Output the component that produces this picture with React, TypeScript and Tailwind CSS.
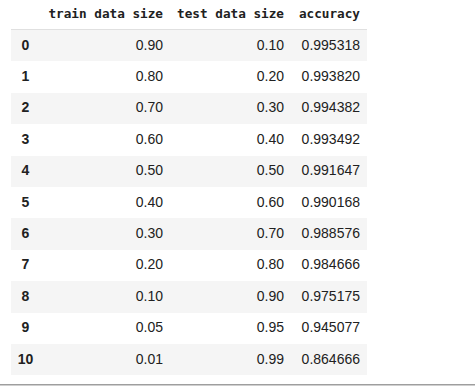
import React from "react";

const rows: [number, string, string, string][] = [
  [0, "0.90", "0.10", "0.995318"],
  [1, "0.80", "0.20", "0.993820"],
  [2, "0.70", "0.30", "0.994382"],
  [3, "0.60", "0.40", "0.993492"],
  [4, "0.50", "0.50", "0.991647"],
  [5, "0.40", "0.60", "0.990168"],
  [6, "0.30", "0.70", "0.988576"],
  [7, "0.20", "0.80", "0.984666"],
  [8, "0.10", "0.90", "0.975175"],
  [9, "0.05", "0.95", "0.945077"],
  [10, "0.01", "0.99", "0.864666"],
];

const cols = "grid grid-cols-[29px_130px_121px_76px]";

export default function App() {
  return (
    <div className="flex h-[387px] w-[475px] flex-col justify-between bg-white text-[#212121]">
      <div className="pl-[11px]">
        <div className="w-[356px]">
          {/* header */}
          <div
            className={`${cols} h-[30px] border-b border-[#e0e0e0] font-['DejaVu_Sans_Mono',monospace] text-[12.7px] font-bold`}
          >
            <div />
            <div className="flex items-center justify-end pr-[7px] pb-[2px]">train data size</div>
            <div className="flex items-center justify-end pr-[7px] pb-[2px]">test data size</div>
            <div className="flex items-center justify-end pr-[7px] pb-[2px]">accuracy</div>
          </div>
          {/* body */}
          {rows.map(([idx, train, test, acc]) => (
            <div
              key={idx}
              className={`${cols} h-[31.4px] font-['Liberation_Sans',Arial,sans-serif] text-[14px] ${
                idx % 2 === 0 ? "bg-[#f5f5f5]" : "bg-white"
              }`}
            >
              <div className="flex items-center justify-center pb-[1px] font-bold">{idx}</div>
              <div className="flex items-center justify-end pr-[7px] pb-[1px]">{train}</div>
              <div className="flex items-center justify-end pr-[7px] pb-[1px]">{test}</div>
              <div className="flex items-center justify-end pr-[7px] pb-[1px]">{acc}</div>
            </div>
          ))}
        </div>
      </div>
      <div>
        <div className="h-[1px] bg-[#9e9e9e]" />
        <div className="h-[1px] bg-[#cfcfcf]" />
        <div className="h-[1px] bg-white" />
      </div>
    </div>
  );
}
